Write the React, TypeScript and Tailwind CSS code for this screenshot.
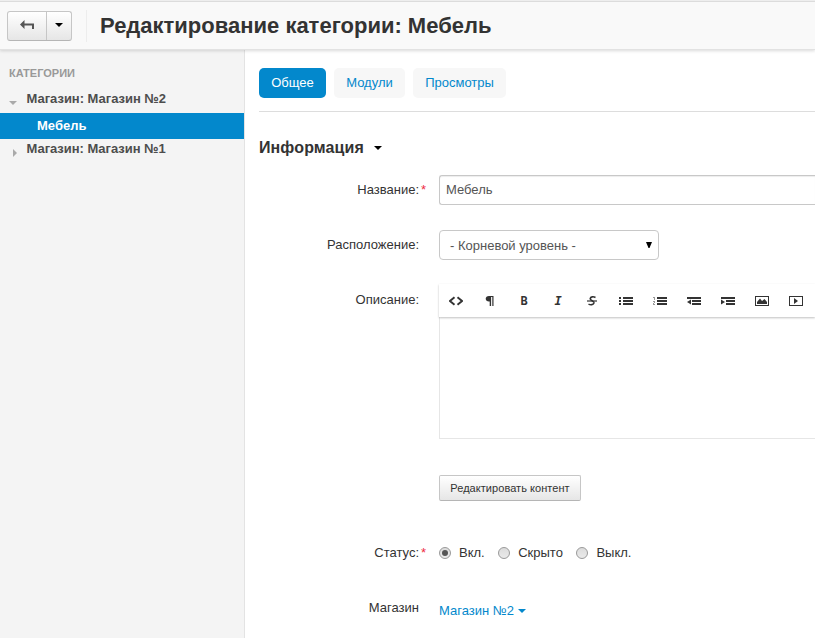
import type { ReactNode } from "react";

function Caret({ className = "" }: { className?: string }) {
  return (
    <svg width="8" height="4" viewBox="0 0 8 4" fill="currentColor" className={className}>
      <path d="M0 0h8L4 4z" />
    </svg>
  );
}

function Label({ children, required = false }: { children: ReactNode; required?: boolean }) {
  return (
    <div className="flex w-[160px] shrink-0 justify-end whitespace-nowrap text-right">
      <span>{children}</span>
      {required && <span className="-mr-[7px] ml-[2px] w-[5px] text-[13px] text-[#ee2c45]">*</span>}
    </div>
  );
}

function Icon({ children }: { children: ReactNode }) {
  return (
    <svg width="14" height="12" viewBox="0 0 14 12" fill="#333" shapeRendering="crispEdges">
      {children}
    </svg>
  );
}

const bars = <path d="M4 2h10v2H4zM4 5h10v2H4zM4 8h10v2H4z" />;
const indentBars = <path d="M0 2h14v2H0zM5 5h9v2H5zM3 8h11v2H3z" />;

const tools: ReactNode[] = [
  <svg width="14" height="12" viewBox="0 0 14 12" fill="none" stroke="#333" strokeWidth="1.9">
    <path d="M5.500 2.300 1 6l4.500 3.700M8.500 2.300 13 6 8.500 9.700" />
  </svg>,
  <svg width="14" height="12" viewBox="0 0 14 12" fill="#333">
    <path d="M6 1h4.500v10H9.300V2H8.100v9H6.700V6.500H6C3.900 6.500 2.700 5.300 2.700 3.800S3.900 1 6 1z" />
  </svg>,
  <span className="font-['DejaVu_Sans_Mono',monospace] text-[12px] font-bold leading-3">B</span>,
  <span className="font-['DejaVu_Sans_Mono',monospace] text-[12px] font-bold italic leading-3">I</span>,
  <svg width="14" height="12" viewBox="0 0 14 12" fill="none" stroke="#333" strokeWidth="1.6">
    <path d="M10.500 2.500C8.500 1.400 5.500 1.500 5.200 3.700c-.2 2 4.100 2.200 3.800 4.200-.4 2.100-3.500 2.200-5.500 1.200" />
    <path d="M2 6h10" strokeWidth="1.2" />
  </svg>,
  <Icon><path d="M0 2h2v2H0zM0 5h2v2H0zM0 8h2v2H0z" />{bars}</Icon>,
  <Icon><path fill="#999" d="M1 2h1v3H1zM0 2h1v1H0zM0 6h2v1H0zM1 7h1v1H1zM0 8h1v1H0zM0 9h2v1H0z" />{bars}</Icon>,
  <Icon>{indentBars}<path fill="#fff" d="M0 4h5v6H0z" /><path shapeRendering="auto" d="M4 4.500v5L0 7z" /><path d="M5 8h9v2H5z" /></Icon>,
  <Icon>{indentBars}<path fill="#fff" d="M0 4h5v6H0z" /><path shapeRendering="auto" d="M0 4.500v5L4 7z" /></Icon>,
  <Icon>
    <path fillRule="evenodd" d="M0 1h14v10H0zM1 2v8h12V2z" />
    <path shapeRendering="auto" d="M2 9V7L5 3.500l2 2.500 2.500-2L12 7v2z" />
  </Icon>,
  <Icon>
    <path fillRule="evenodd" d="M0 1h14v10H0zM1 2v8h12V2z" />
    <path shapeRendering="auto" d="M5 3v6l4-3z" />
  </Icon>,
];

function Radio({ label, checked = false }: { label: string; checked?: boolean }) {
  return (
    <label className="flex items-center">
      <span className="mr-2 flex size-3 items-center justify-center rounded-full border border-[#999] bg-gradient-to-b from-[#dcdcdc] to-[#eaeaea]">
        {checked && <span className="size-[6px] rounded-full bg-[#555]" />}
      </span>
      {label}
    </label>
  );
}

export default function App() {
  return (
    <div className="flex h-[638px] w-[815px] flex-col overflow-hidden bg-white font-['Liberation_Sans',Arial,sans-serif] text-[13px] leading-5 text-[#333]">
      <header className="z-10 flex h-[50px] shrink-0 items-center border-t border-[#eee] bg-[#f9f9f9] pl-[7px] shadow-[inset_0_1px_0_#dcdcdc,inset_0_-1px_0_#e2e2e2,0_1px_3px_rgba(0,0,0,0.15)]">
        <div className="flex h-[30px] overflow-hidden rounded-[3px] border border-[#c6c6c6] border-b-[#b5b5b5] bg-gradient-to-b from-white to-[#e6e6e6]">
          <button className="flex w-[39px] items-center justify-center border-r border-[#c6c6c6]">
            <svg width="14" height="10" viewBox="0 0 14 10" fill="#555" className="-mt-[2px]">
              <path d="M0 4.500 4.500 0v3.500H14V9h-2V5.500H4.500V9z" />
            </svg>
          </button>
          <button className="flex w-6 items-center justify-center text-black"><Caret className="-mt-[2px]" /></button>
        </div>
        <div className="ml-[14px] h-8 w-px bg-[#ededed]" />
        <h1 className="ml-[13px] whitespace-nowrap text-[22px] font-bold leading-[30px]">Редактирование категории: Мебель</h1>
      </header>

      <div className="flex min-h-0 flex-1">
        <aside className="w-[245px] shrink-0 border-r border-[#e3e3e3] bg-[#f4f4f4] pt-[13px] font-bold text-[#4d4d4d]">
          <h2 className="pl-[9px] text-[11px] leading-5 text-[#999]">КАТЕГОРИИ</h2>
          <div className="flex h-[30px] items-start pl-[9px] pt-[6px]">
            <Caret className="mt-[12px] text-[#aaa]" />
            <span className="ml-[9.500px] tracking-[-0.02px]">Магазин: Магазин №2</span>
          </div>
          <div className="h-[26px] bg-[#0388cc] pl-[37px] leading-[26px] text-white">Мебель</div>
          <div className="flex items-start pl-[13px]">
            <svg width="4" height="8" viewBox="0 0 4 8" className="mt-[10px] fill-[#aaa]"><path d="M0 0v8l4-4z" /></svg>
            <span className="ml-[9.500px] tracking-[-0.04px]">Магазин: Магазин №1</span>
          </div>
        </aside>

        <main className="min-w-0 flex-1 pl-[14px] pt-[18px]">
          <nav className="flex h-[44px] gap-2 border-b border-[#ddd] text-center text-[#0388cc]">
            <a className="h-[30px] w-[67px] rounded-[5px] bg-[#0388cc] leading-[30px] text-white">Общее</a>
            <a className="h-[30px] w-[71px] rounded-[5px] bg-[#f7f7f7] leading-[30px]">Модули</a>
            <a className="h-[30px] w-[93px] rounded-[5px] bg-[#f7f7f7] leading-[30px]">Просмотры</a>
          </nav>
          <h3 className="mt-[26px] flex h-5 items-center text-base font-bold leading-5 tracking-[0.1px]">
            Информация <Caret className="ml-[10px] text-black" />
          </h3>

          <form>
            <div className="mt-[17px] flex h-[30px] items-center">
              <Label required>Название:</Label>
              <div className="ml-5 h-[30px] flex-1 rounded-l-[3px] border border-r-0 border-[#c8c8c8] pl-[6px] leading-[28px] text-[#555] shadow-[inset_0_1px_1px_rgba(0,0,0,0.075)]">Мебель</div>
            </div>
            <div className="mt-[25px] flex h-[30px] items-center">
              <Label>Расположение:</Label>
              <div className="ml-5 flex h-[30px] w-[220px] items-center justify-between rounded-[4px] border border-[#c8c8c8] pl-[10px] pr-[6px] text-[#555]">
                <span className="relative top-px">- Корневой уровень -</span>
                <svg width="6" height="6" viewBox="0 0 6 6" className="fill-black"><path d="M0 0h6L3.500 6h-1z" /></svg>
              </div>
            </div>
            <div className="mt-[24px] flex h-[155px]">
              <div className="pt-[6px]"><Label>Описание:</Label></div>
              <div className="ml-5 min-w-0 flex-1">
                <div className="relative flex h-[33px] shadow-[0_1px_2px_rgba(0,0,0,0.25)]">
                  {tools.map((tool, i) => (
                    <span key={i} className="flex w-[34px] shrink-0 items-center justify-center pt-px">{tool}</span>
                  ))}
                </div>
                <div className="h-[122px] border-b border-l border-[#e6e6e6]" />
              </div>
            </div>
            <button type="button" className="ml-[180px] mt-[36px] block h-[26px] w-[142px] whitespace-nowrap rounded-[2px] border border-[#c6c6c6] border-b-[#b5b5b5] bg-gradient-to-b from-white to-[#e6e6e6] text-[11px] leading-6 tracking-[0.05px]">
              Редактировать контент
            </button>
            <div className="mt-[42px] flex h-5 items-center">
              <Label required>Статус:</Label>
              <div className="ml-5 flex gap-[13.500px]">
                <Radio label="Вкл." checked />
                <Radio label="Скрыто" />
                <Radio label="Выкл." />
              </div>
            </div>
            <div className="mt-[35px] flex">
              <Label>Магазин</Label>
              <a className="ml-5 mt-[3px] flex items-center text-[#0388cc]">Магазин №2 <Caret className="-mt-px ml-1" /></a>
            </div>
          </form>
        </main>
      </div>
    </div>
  );
}
